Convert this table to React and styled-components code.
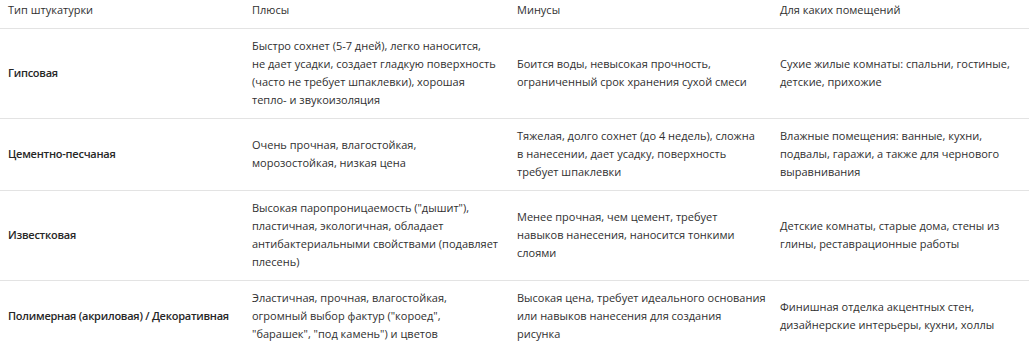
import styled, { createGlobalStyle } from "styled-components";

const GlobalStyle = createGlobalStyle`
  body {
    margin: 0;
    background: #fff;
    font-family: "Open Sans", "Noto Sans", sans-serif;
  }
`;

// lines are split the way the original table wraps them
const rows = [
  {
    type: "Гипсовая",
    pros: [
      "Быстро сохнет (5-7 дней), легко наносится,",
      "не дает усадки, создает гладкую поверхность",
      "(часто не требует шпаклевки), хорошая",
      "тепло- и звукоизоляция",
    ],
    cons: ["Боится воды, невысокая прочность,", "ограниченный срок хранения сухой смеси"],
    rooms: ["Сухие жилые комнаты: спальни, гостиные,", "детские, прихожие"],
  },
  {
    type: "Цементно-песчаная",
    pros: ["Очень прочная, влагостойкая,", "морозостойкая, низкая цена"],
    cons: [
      "Тяжелая, долго сохнет (до 4 недель), сложна",
      "в нанесении, дает усадку, поверхность",
      "требует шпаклевки",
    ],
    rooms: [
      "Влажные помещения: ванные, кухни,",
      "подвалы, гаражи, а также для чернового",
      "выравнивания",
    ],
  },
  {
    type: "Известковая",
    pros: [
      "Высокая паропроницаемость (\"дышит\"),",
      "пластичная, экологичная, обладает",
      "антибактериальными свойствами (подавляет",
      "плесень)",
    ],
    cons: [
      "Менее прочная, чем цемент, требует",
      "навыков нанесения, наносится тонкими",
      "слоями",
    ],
    rooms: ["Детские комнаты, старые дома, стены из", "глины, реставрационные работы"],
  },
  {
    type: "Полимерная (акриловая) / Декоративная",
    pros: [
      "Эластичная, прочная, влагостойкая,",
      "огромный выбор фактур (\"короед\",",
      "\"барашек\", \"под камень\") и цветов",
    ],
    cons: [
      "Высокая цена, требует идеального основания",
      "или навыков нанесения для создания",
      "рисунка",
    ],
    rooms: ["Финишная отделка акцентных стен,", "дизайнерские интерьеры, кухни, холлы"],
  },
];

const Lines = ({ lines }) =>
  lines.map((line, i) => <Line key={i}>{line}</Line>);

const App = () => {
  return (
    <>
      <GlobalStyle />
      <Table>
        <colgroup>
          <col style={{ width: 244 }} />
          <col style={{ width: 265 }} />
          <col style={{ width: 263 }} />
          <col />
        </colgroup>
        <thead>
          <tr>
            <Th>Тип штукатурки</Th>
            <Th>Плюсы</Th>
            <Th>Минусы</Th>
            <Th>Для каких помещений</Th>
          </tr>
        </thead>
        <tbody>
          {rows.map((row, key) => (
            <Row key={key}>
              <Td $label>{row.type}</Td>
              <Td><Lines lines={row.pros} /></Td>
              <Td><Lines lines={row.cons} /></Td>
              <Td><Lines lines={row.rooms} /></Td>
            </Row>
          ))}
        </tbody>
      </Table>
    </>
  );
};

const Table = styled.table`
  width: 100%;
  border-collapse: collapse;
  table-layout: fixed;
  font-size: 11px;
  line-height: 18px;
  color: #303030;
`;

const Th = styled.th`
  text-align: left;
  font-weight: 400;
  padding: 1px 8px 9px;
  border-bottom: 1px solid #e3e3e3;
  vertical-align: middle;
`;

const Row = styled.tr`
  border-bottom: 1px solid #e3e3e3;

  &:last-child {
    border-bottom: none;
  }
`;

const Td = styled.td`
  padding: 8px 6px 9px 8px;
  vertical-align: middle;
  white-space: nowrap;
  font-weight: ${(p) => (p.$label ? 600 : 400)};
  letter-spacing: ${(p) => (p.$label ? "-0.25px" : "normal")};
  color: ${(p) => (p.$label ? "#262626" : "#303030")};
`;

const Line = styled.span`
  display: block;
`;

export default App;
